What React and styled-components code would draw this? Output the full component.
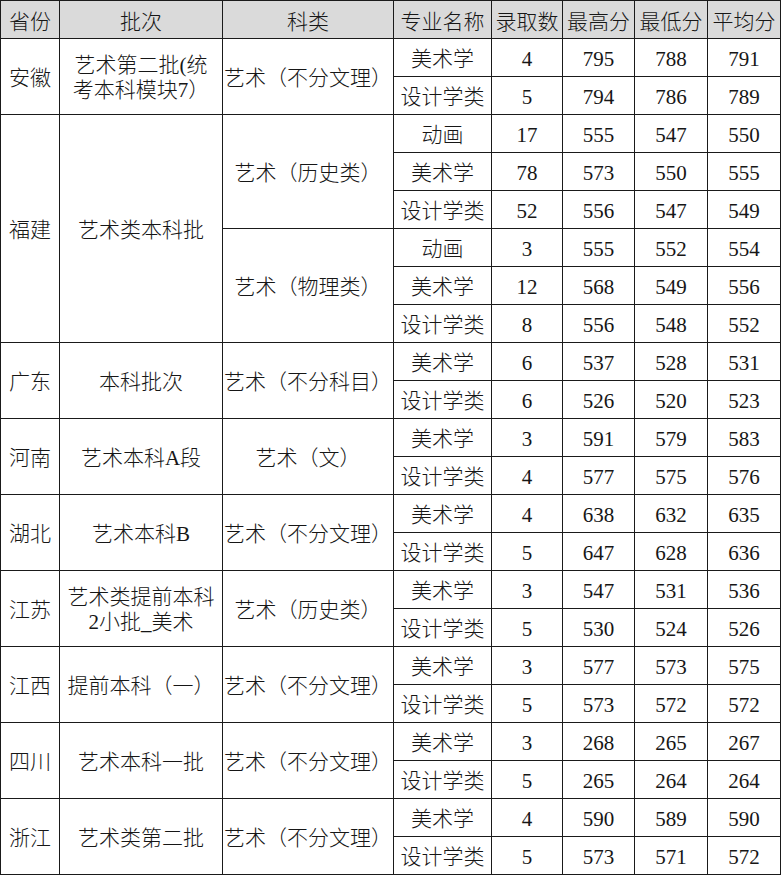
import React from "react";
import styled, { createGlobalStyle } from "styled-components";

const GlobalStyle = createGlobalStyle`
  html, body { margin: 0; padding: 0; background: #fff; }
  body { font-family: "Liberation Serif", "Noto Sans CJK SC", serif; color: #111; }
`;

const Table = styled.table`
  border-collapse: collapse;
  table-layout: fixed;
  width: 781px;
  font-size: 21px;
  font-family: "Liberation Serif", "Noto Sans CJK SC", serif;
  font-weight: 300;
  color: #161616;
`;

const HeadCell = styled.th`
  height: 36px;
  padding: 1px 0 0;
  font-weight: 300;
  background: #dadada;
  border: 1px solid #1a1a1a;
  text-align: center;
  vertical-align: middle;
  white-space: nowrap;
`;

const Cell = styled.td`
  height: 34px;
  padding: 3px 0 0;
  border: 1px solid #1a1a1a;
  text-align: center;
  vertical-align: middle;
  line-height: 25px;
  white-space: nowrap;
`;

const columns = [
  { label: "省份", w: 59 },
  { label: "批次", w: 163 },
  { label: "科类", w: 171 },
  { label: "专业名称", w: 98 },
  { label: "录取数", w: 71 },
  { label: "最高分", w: 72 },
  { label: "最低分", w: 73 },
  { label: "平均分", w: 73 },
];

const data = [
  {
    prov: "安徽",
    batch: ["艺术第二批(统", "考本科模块7）"],
    groups: [
      {
        kind: "艺术（不分文理）",
        rows: [
          ["美术学", 4, 795, 788, 791],
          ["设计学类", 5, 794, 786, 789],
        ],
      },
    ],
  },
  {
    prov: "福建",
    batch: ["艺术类本科批"],
    groups: [
      {
        kind: "艺术（历史类）",
        rows: [
          ["动画", 17, 555, 547, 550],
          ["美术学", 78, 573, 550, 555],
          ["设计学类", 52, 556, 547, 549],
        ],
      },
      {
        kind: "艺术（物理类）",
        rows: [
          ["动画", 3, 555, 552, 554],
          ["美术学", 12, 568, 549, 556],
          ["设计学类", 8, 556, 548, 552],
        ],
      },
    ],
  },
  {
    prov: "广东",
    batch: ["本科批次"],
    groups: [
      {
        kind: "艺术（不分科目）",
        rows: [
          ["美术学", 6, 537, 528, 531],
          ["设计学类", 6, 526, 520, 523],
        ],
      },
    ],
  },
  {
    prov: "河南",
    batch: ["艺术本科A段"],
    groups: [
      {
        kind: "艺术（文）",
        rows: [
          ["美术学", 3, 591, 579, 583],
          ["设计学类", 4, 577, 575, 576],
        ],
      },
    ],
  },
  {
    prov: "湖北",
    batch: ["艺术本科B"],
    groups: [
      {
        kind: "艺术（不分文理）",
        rows: [
          ["美术学", 4, 638, 632, 635],
          ["设计学类", 5, 647, 628, 636],
        ],
      },
    ],
  },
  {
    prov: "江苏",
    batch: ["艺术类提前本科", "2小批_美术"],
    groups: [
      {
        kind: "艺术（历史类）",
        rows: [
          ["美术学", 3, 547, 531, 536],
          ["设计学类", 5, 530, 524, 526],
        ],
      },
    ],
  },
  {
    prov: "江西",
    batch: ["提前本科（一）"],
    groups: [
      {
        kind: "艺术（不分文理）",
        rows: [
          ["美术学", 3, 577, 573, 575],
          ["设计学类", 5, 573, 572, 572],
        ],
      },
    ],
  },
  {
    prov: "四川",
    batch: ["艺术本科一批"],
    groups: [
      {
        kind: "艺术（不分文理）",
        rows: [
          ["美术学", 3, 268, 265, 267],
          ["设计学类", 5, 265, 264, 264],
        ],
      },
    ],
  },
  {
    prov: "浙江",
    batch: ["艺术类第二批"],
    groups: [
      {
        kind: "艺术（不分文理）",
        rows: [
          ["美术学", 4, 590, 589, 590],
          ["设计学类", 5, 573, 571, 572],
        ],
      },
    ],
  },
];

export default function App() {
  const bodyRows = [];
  data.forEach((p) => {
    const total = p.groups.reduce((n, g) => n + g.rows.length, 0);
    p.groups.forEach((g, gi) => {
      g.rows.forEach((r, ri) => {
        const first = gi === 0 && ri === 0;
        bodyRows.push(
          <tr key={`${p.prov}-${gi}-${ri}`}>
            {first && <Cell rowSpan={total}>{p.prov}</Cell>}
            {first && (
              <Cell rowSpan={total}>
                {p.batch.map((line, i) => (
                  <React.Fragment key={i}>
                    {i > 0 && <br />}
                    {line}
                  </React.Fragment>
                ))}
              </Cell>
            )}
            {ri === 0 && <Cell rowSpan={g.rows.length}>{g.kind}</Cell>}
            {r.map((v, i) => (
              <Cell key={i}>{v}</Cell>
            ))}
          </tr>
        );
      });
    });
  });

  return (
    <>
      <GlobalStyle />
      <Table>
        <colgroup>
          {columns.map((c) => (
            <col key={c.label} style={{ width: c.w }} />
          ))}
        </colgroup>
        <thead>
          <tr>
            {columns.map((c) => (
              <HeadCell key={c.label}>{c.label}</HeadCell>
            ))}
          </tr>
        </thead>
        <tbody>{bodyRows}</tbody>
      </Table>
    </>
  );
}
